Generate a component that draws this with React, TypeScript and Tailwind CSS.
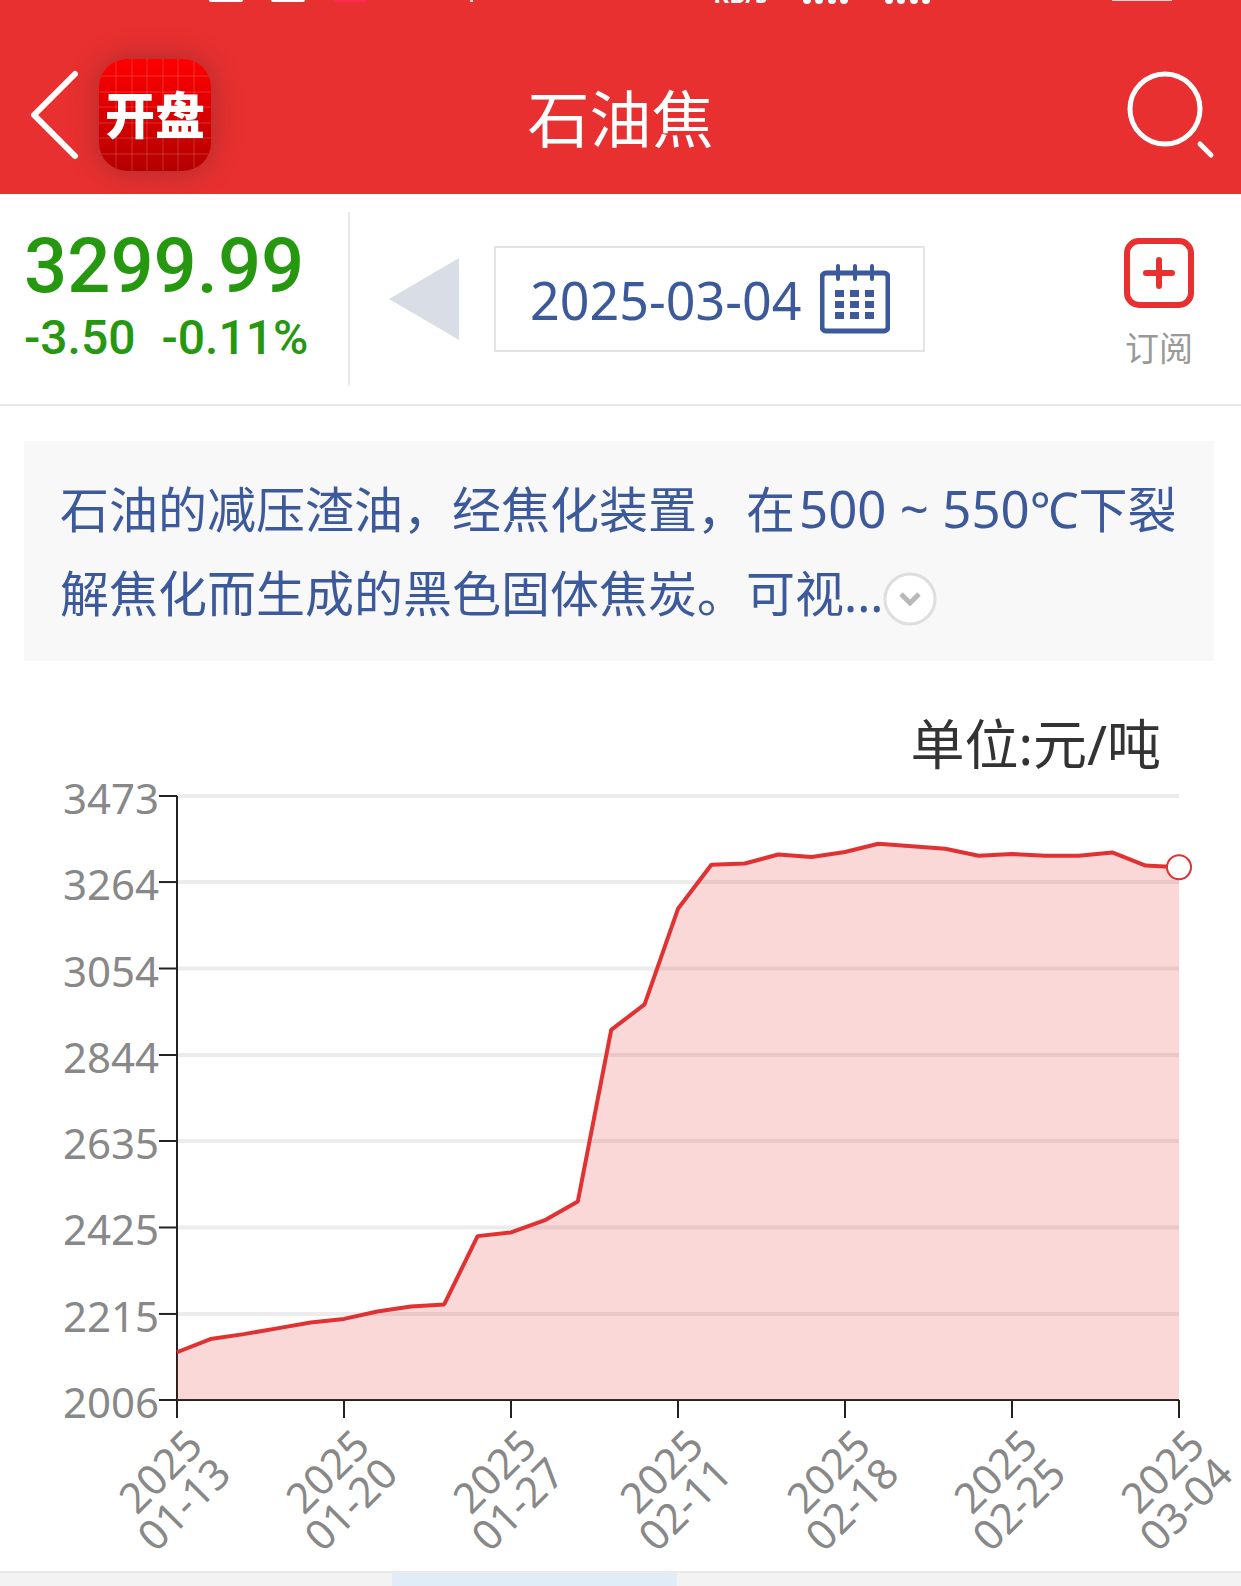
const GRID_VALUES = [3473, 3264, 3054, 2844, 2635, 2425, 2215, 2006]

const DATE_LABELS = ['01-13', '01-20', '01-27', '02-11', '02-18', '02-25', '03-04']

const PRICES = [
  2122, 2154, 2166, 2180, 2194, 2203, 2221, 2233, 2238, 2404, 2413, 2442, 2488,
  2905, 2967, 3199, 3306, 3309, 3331, 3325, 3337, 3357, 3351, 3345, 3328, 3332,
  3328, 3328, 3336, 3304, 3299.99,
]

const PLOT = { left: 177, right: 1179, top: 25, bottom: 629 }
const MAX = 3473
const MIN = 2006

function toX(index: number, count: number) {
  return PLOT.left + ((PLOT.right - PLOT.left) * index) / (count - 1)
}

function toY(value: number) {
  return PLOT.bottom - ((PLOT.bottom - PLOT.top) * (value - MIN)) / (MAX - MIN)
}

function StatusBar() {
  return (
    <div className="flex h-2 w-full items-start overflow-hidden">
      <div className="flex w-[57%] gap-7 pl-[209px]">
        <span className="h-[2px] w-[34px] rounded-b-sm bg-white" />
        <span className="h-[2px] w-[34px] rounded-b-sm bg-white" />
        <span className="h-[2px] w-[34px] rounded-b-sm bg-[#ff2850]" />
        <span className="ml-[75px] h-[2px] w-[3px] bg-white/80" />
      </div>
      <div className="flex flex-1 items-start gap-9 pl-[6px] text-white">
        <span className="flex h-[6px] items-end text-[24px] leading-6 font-bold">
          KB/s
        </span>
        <Signal />
        <Signal />
      </div>
      <span className="mr-[69px] h-px w-[60px] bg-white/80" />
    </div>
  )
}

function Signal() {
  return (
    <svg width="46" height="8" viewBox="0 0 46 8" aria-hidden="true">
      {[4, 16, 29, 41].map((x) => (
        <circle key={x} cx={x} cy="0" r="4" fill="#fff" />
      ))}
    </svg>
  )
}

function AppLogo() {
  return (
    <div className="relative flex size-28 items-center justify-center overflow-hidden rounded-[28px] bg-linear-to-b from-[#ff0000] to-[#b40000]">
      <svg className="absolute inset-0" viewBox="0 0 112 112" aria-hidden="true">
        {[17, 33, 48, 64, 79, 95].map((p) => (
          <path
            key={p}
            d={`M${p} 0V112M0 ${p}H112`}
            stroke="#fff"
            strokeOpacity="0.18"
            strokeWidth="1"
          />
        ))}
      </svg>
      <span className="relative text-[50px] leading-none font-black text-white">
        开盘
      </span>
    </div>
  )
}

function Header() {
  return (
    <header className="bg-[#e83030] text-white">
      <StatusBar />
      <div className="grid h-[186px] grid-cols-[1fr_auto_1fr] items-center pt-7">
        <div className="flex items-center gap-5 pl-[30px]">
          <button type="button" aria-label="返回">
            <svg width="49" height="90" viewBox="0 0 49 90" fill="none">
              <path
                d="M45 4 4 45l41 41"
                stroke="#fff"
                strokeWidth="6"
                strokeLinecap="round"
                strokeLinejoin="round"
              />
            </svg>
          </button>
          <div className="rounded-[28px] shadow-[0_0_28px_rgba(90,40,40,0.45)]">
            <AppLogo />
          </div>
        </div>
        <h1 className="pt-2 text-[62px] leading-none">石油焦</h1>
        <div className="flex justify-end pr-[26px]">
          <button type="button" aria-label="搜索">
            <svg width="90" height="90" viewBox="0 0 90 90" fill="none">
              <circle cx="40" cy="39" r="35" stroke="#fff" strokeWidth="5" />
              <path
                d="m75 74 11 11"
                stroke="#fff"
                strokeWidth="5"
                strokeLinecap="round"
              />
            </svg>
          </button>
        </div>
      </div>
    </header>
  )
}

function CalendarIcon() {
  return (
    <svg width="70" height="70" viewBox="0 0 70 70" fill="none" aria-hidden="true">
      <rect x="2" y="9" width="66" height="58" rx="4" stroke="#3c5a9b" strokeWidth="5" />
      {[18, 35, 52].map((x) => (
        <path
          key={x}
          d={`M${x} 2V15`}
          stroke="#3c5a9b"
          strokeWidth="4"
          strokeLinecap="round"
        />
      ))}
      {[26, 37, 48].map((y) =>
        [15, 30, 45].map((x) => (
          <rect key={`${x}-${y}`} x={x} y={y} width="9" height="7" fill="#3c5a9b" />
        )),
      )}
    </svg>
  )
}

function QuoteBar() {
  return (
    <section className="flex h-[212px] items-start border-b-2 border-[#e9e9e9] pt-[18px]">
      <div className="flex h-[174px] w-[350px] shrink-0 flex-col border-r-2 border-[#e9e9e9] pt-[14px] pl-6 font-[Roboto] font-medium text-[#26980f]">
        <p className="text-[76px] leading-20">3299.99</p>
        <p className="flex gap-[26px] text-[48px] leading-16">
          <span>-3.50</span>
          <span>-0.11%</span>
        </p>
      </div>

      <div className="flex h-[174px] flex-1 items-center pl-[39px]">
        <button type="button" aria-label="前一天">
          <svg width="70" height="82" viewBox="0 0 70 82">
            <path d="M0 41 70 0v82z" fill="#d9dee6" />
          </svg>
        </button>
        <label className="ml-[35px] flex h-[106px] w-[431px] items-center justify-between border-2 border-[#e3e3e3] pr-[33px] pl-[34px]">
          <input
            type="text"
            readOnly
            aria-label="日期"
            defaultValue="2025-03-04"
            className="w-[280px] min-w-0 text-[52px] leading-none text-[#3c5a9b] outline-none"
          />
          <CalendarIcon />
        </label>
      </div>

      <button
        type="button"
        className="mr-[47px] flex flex-col items-center gap-4 pt-[26px] text-[34px] leading-12 text-[#999]"
      >
        <svg width="70" height="70" viewBox="0 0 70 70" fill="none" aria-hidden="true">
          <rect x="3" y="3" width="64" height="64" rx="12" stroke="#e83030" strokeWidth="6" />
          <path
            d="M22 35H48M35 22V48"
            stroke="#e83030"
            strokeWidth="6"
            strokeLinecap="round"
          />
        </svg>
        订阅
      </button>
    </section>
  )
}

function Description() {
  return (
    <section className="mt-[35px] mr-[27px] ml-6 bg-[#f8f8f8] px-9 py-[26px]">
      <p className="text-[49px] leading-[84px] text-[#3c5a9b]">
        石油的减压渣油，经焦化装置，在
        <span className="ml-1 text-[51px] leading-none">500 ~ 550</span>
        ℃下裂解焦化而生成的黑色固体焦炭。可视...
        <button type="button" aria-label="展开" className="align-middle">
          <svg width="54" height="54" viewBox="0 0 54 54" fill="none">
            <circle cx="27" cy="27" r="25" fill="#fff" stroke="#dedede" strokeWidth="3" />
            <path d="m18 22 9 9 9-9" stroke="#b9b9b9" strokeWidth="5" />
          </svg>
        </button>
      </p>
    </section>
  )
}

function PriceChart() {
  const points = PRICES.map((price, i) => `${toX(i, PRICES.length)},${toY(price)}`)
  const line = `M${points.join('L')}`

  return (
    <svg
      className="block w-full"
      viewBox="0 0 1241 800"
      role="img"
      aria-label="石油焦价格走势"
    >
      {GRID_VALUES.slice(0, -1).map((value) => (
        <path
          key={value}
          d={`M${PLOT.left} ${toY(value)}H${PLOT.right}`}
          stroke="#ececec"
          strokeWidth="4"
        />
      ))}

      <g stroke="#222" strokeWidth="2">
        <path d={`M${PLOT.left} ${PLOT.top}V${PLOT.bottom}H${PLOT.right}`} fill="none" />
        {GRID_VALUES.map((value) => (
          <path key={value} d={`M${PLOT.left - 18} ${toY(value)}h18`} />
        ))}
        {DATE_LABELS.map((label, i) => (
          <path key={label} d={`M${toX(i, DATE_LABELS.length)} ${PLOT.bottom}v18`} />
        ))}
      </g>

      <path
        d={`${line}V${PLOT.bottom}H${PLOT.left}Z`}
        fill="#e83030"
        fillOpacity="0.19"
      />
      <path d={line} fill="none" stroke="#e03232" strokeWidth="4" strokeLinejoin="bevel" />
      <circle
        cx={PLOT.right}
        cy={toY(PRICES[PRICES.length - 1])}
        r="12"
        fill="#fff"
        stroke="#e03232"
        strokeWidth="2"
      />

      <g fill="#888" fontSize="42" textAnchor="end">
        {GRID_VALUES.map((value) => (
          <text key={value} x={PLOT.left - 18} y={toY(value) + 18}>
            {value}
          </text>
        ))}
        {DATE_LABELS.map((label, i) => (
          <g
            key={label}
            transform={`translate(${toX(i, DATE_LABELS.length) + 28} ${PLOT.bottom + 48}) rotate(-45)`}
          >
            <text>2025</text>
            <text y="40">{label}</text>
          </g>
        ))}
      </g>
    </svg>
  )
}

export default function App() {
  return (
    <main className="min-h-screen overflow-hidden bg-white font-['Noto_Sans','Noto_Sans_CJK_SC',sans-serif]">
      <Header />
      <QuoteBar />
      <Description />
      <section>
        <h2 className="pt-[57px] pr-20 text-right text-[54px] leading-[53px] text-[#333]">
          单位:元/吨
        </h2>
        <PriceChart />
      </section>
      <div className="flex h-[15px] border-t-2 border-[#e9e9e9] bg-[#f3f3f3]">
        <div className="ml-[392px] w-[285px] bg-[#e0ecf8]" />
      </div>
    </main>
  )
}
